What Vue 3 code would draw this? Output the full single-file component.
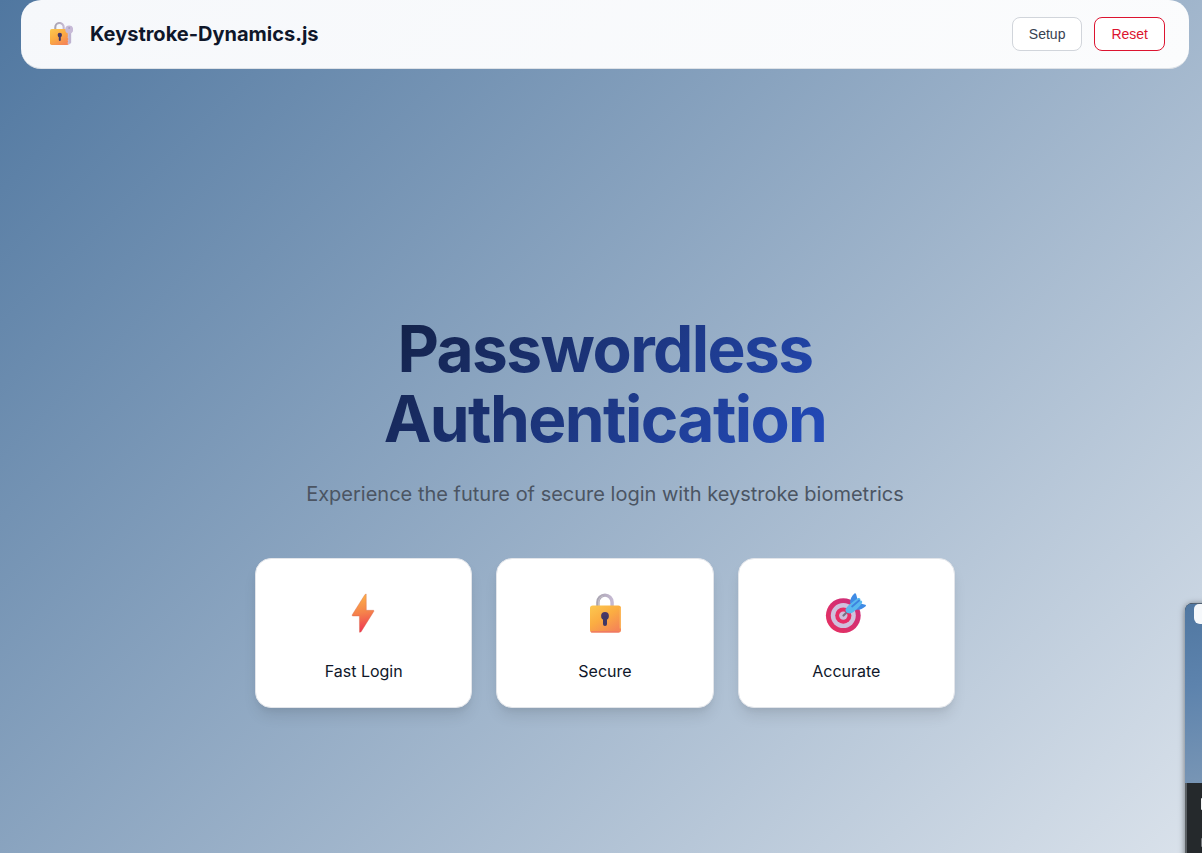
<script setup>
const features = [
  { icon: 'bolt', label: 'Fast Login' },
  { icon: 'lock', label: 'Secure' },
  { icon: 'target', label: 'Accurate' },
]
</script>

<template>
  <div class="page">
    <svg class="defs" width="0" height="0" aria-hidden="true">
      <defs>
        <linearGradient id="gold" x1="0" y1="0" x2="0.7" y2="1">
          <stop offset="0" stop-color="#fcc850" />
          <stop offset="0.5" stop-color="#fbad42" />
          <stop offset="1" stop-color="#f58656" />
        </linearGradient>
        <linearGradient id="fire" x1="0.3" y1="0" x2="0.4" y2="1">
          <stop offset="0" stop-color="#fdb446" />
          <stop offset="0.5" stop-color="#f5824b" />
          <stop offset="1" stop-color="#ef3454" />
        </linearGradient>
        <linearGradient id="steel" x1="0" y1="0" x2="1" y2="0">
          <stop offset="0" stop-color="#aaa5b2" />
          <stop offset="1" stop-color="#c5b9d2" />
        </linearGradient>
        <linearGradient id="hole" x1="0" y1="0" x2="0" y2="1">
          <stop offset="0" stop-color="#4e3868" />
          <stop offset="1" stop-color="#403764" />
        </linearGradient>
        <linearGradient id="ring" x1="1" y1="0" x2="0" y2="1">
          <stop offset="0" stop-color="#c92e7e" />
          <stop offset="1" stop-color="#e8315f" />
        </linearGradient>
      </defs>
    </svg>

    <header class="bar">
      <div class="brand">
        <svg class="logo" viewBox="0 0 24 24">
          <path d="M6.3 9V5.2a4.2 4.2 0 0 1 8.4 0V9" fill="none" stroke="url(#steel)" stroke-width="2.1" />
          <rect x="1" y="7" width="19" height="16" rx="1.7" fill="url(#gold)" />
          <circle cx="10.8" cy="13" r="2.2" fill="url(#hole)" />
          <path d="M9.8 13h2v5a1 1 0 0 1-2 0z" fill="#403764" />
          <path d="M18.8 9.5h3.4v11.3L20.8 22.3h-1.4L18.3 21l.9-1.3-.6-1.4.9-1.2-1-1.5.3-.8z" fill="#c7bdd8" />
          <path d="M21 11v10" stroke="#b3a7c7" stroke-width=".9" />
          <circle cx="20.2" cy="7.6" r="4" fill="#c7bad7" />
          <circle cx="20.2" cy="6" r="1" fill="#aaa0bd" />
        </svg>
        <span class="name">Keystroke-Dynamics.js</span>
      </div>
      <nav class="actions">
        <button class="btn">Setup</button>
        <button class="btn danger">Reset</button>
      </nav>
    </header>

    <main class="hero">
      <h1>Passwordless<br />Authentication</h1>
      <p class="lead">Experience the future of secure login with keystroke biometrics</p>
      <div class="cards">
        <div v-for="f in features" :key="f.icon" class="card">
          <svg v-if="f.icon === 'bolt'" class="icon" viewBox="0 0 40 40">
            <path d="M14 .9 15.2.4 15.3 16.7H22.7L22.9 17.6 10 38.3 8.5 38.7 8.4 22.4H1.4L1.1 21.4z" transform="translate(7 .6)" fill="url(#fire)" stroke="#d76b4b" stroke-width=".4" />
          </svg>
          <svg v-else-if="f.icon === 'lock'" class="icon" viewBox="0 0 40 40">
            <path d="M12.9 14V9.2a7.1 7.1 0 0 1 14.2 0V14" fill="none" stroke="url(#steel)" stroke-width="3.4" />
            <path d="M13.6 13V9.2a6.4 6.4 0 0 1 4.2-6" fill="none" stroke="#c6c2cb" stroke-width="1" />
            <rect x="5" y="12.4" width="31" height="27.2" rx="2.7" fill="url(#gold)" />
            <path d="M6.5 38.8h27" stroke="#ee7667" stroke-width="1.3" stroke-linecap="round" />
            <path d="M35.2 15v20" stroke="#fdbe5e" stroke-width="1.1" stroke-linecap="round" />
            <circle cx="20" cy="23" r="3.9" fill="url(#hole)" />
            <path d="M18 23h4v8a2 2 0 0 1-4 0z" fill="#403764" />
          </svg>
          <svg v-else class="icon" viewBox="0 0 40 40">
            <g transform="translate(-1 .2)">
              <circle cx="18.3" cy="22.4" r="17.4" fill="url(#ring)" />
              <circle cx="18.3" cy="22.4" r="12.5" fill="#cfc1dd" />
              <circle cx="18.3" cy="22.4" r="8.1" fill="#e72e66" />
              <circle cx="18.3" cy="22.4" r="4.2" fill="#cdbfda" />
              <path d="m18.5 22.3 4-4" stroke="#777083" stroke-width="2.2" stroke-linecap="round" />
              <path d="M25 9.5c0-3.5 2-7 4.5-9.2.9-.6 1.4.2 1.7 1.1l1.5 5.3-4.8 5zM30.5 15.5l5-5.2 4.8 1.2c1 .4.8 1.2.1 1.7-2.5 2.2-6 3.8-9.8 3.4z" fill="#3f8be5" />
              <path d="M20.7 15.8c1.2-2.8 8-8.3 11.7-10.6 2.1-1.3 3.7.4 2.8 2.1 1.5-.6 2.8 1.1 1.5 3-2.7 3.9-7.8 9-10.7 9.8-3 .8-6.4-1.7-5.3-4.3z" fill="#59b8ee" />
              <path d="m27.1 13.3 7-6" stroke="#3d83df" stroke-width="1.8" stroke-linecap="round" />
            </g>
          </svg>
          <span class="label">{{ f.label }}</span>
        </div>
      </div>
    </main>

    <aside class="preview">
      <div class="preview-page"><div class="preview-bar"></div></div>
      <div class="preview-foot"><i class="mark"></i><i class="mark dim"></i></div>
    </aside>
  </div>
</template>

<style>
body {
  margin: 0;
  overflow: hidden;
}
</style>

<style scoped>
* {
  box-sizing: border-box;
}
.page {
  position: relative;
  height: 853px;
  padding: 0 13px 0 21px;
  overflow: hidden;
  font-family: Inter, "Liberation Sans", sans-serif;
  color: #0f172a;
  background: linear-gradient(135deg, #5077a0 0%, #dae2eb 100%);
}
.defs {
  position: absolute;
}
.bar {
  display: flex;
  align-items: center;
  justify-content: space-between;
  height: 69px;
  padding: 0 24px 1px 28px;
  border-bottom: 1px solid #dee2e7;
  border-radius: 20px;
  background: linear-gradient(135deg, #f6f8fb, #fbfcfd);
}
.brand {
  display: flex;
  align-items: center;
  gap: 17px;
}
.logo {
  width: 24px;
  height: 24px;
}
.name {
  font-size: 20px;
  font-weight: 700;
  line-height: 30px;
}
.actions {
  display: flex;
  gap: 12px;
}
.btn {
  height: 34px;
  padding: 0 16px;
  border: 1px solid #d1d5db;
  border-radius: 8px;
  background: #fff;
  color: #374151;
  font: 14px "Liberation Sans", Arial, sans-serif;
}
.danger {
  border-color: #dc1430;
  color: #dc1430;
}
.hero {
  display: flex;
  flex-direction: column;
  align-items: center;
  padding-top: 245px;
}
h1 {
  width: 700px;
  margin: 0;
  font-size: 64px;
  font-weight: 700;
  line-height: 70.4px;
  letter-spacing: -1.6px;
  text-align: center;
  color: transparent;
  background: linear-gradient(135deg, #0f172a 0%, #1e3a8a 55%, #2554d8 100%);
  background-clip: text;
  -webkit-background-clip: text;
}
.lead {
  margin: 23px 0 48px;
  font-size: 20px;
  line-height: 32px;
  color: #4b5563;
}
.cards {
  display: grid;
  grid-template-columns: repeat(3, 1fr);
  gap: 24px;
  width: 700px;
}
.card {
  display: flex;
  flex-direction: column;
  align-items: center;
  height: 150px;
  padding-top: 34px;
  border: 1px solid #e2e5ea;
  border-radius: 16px;
  background: #fff;
  box-shadow: 0 10px 15px -3px rgba(0, 0, 0, 0.1), 0 4px 6px -2px rgba(0, 0, 0, 0.05);
}
.icon {
  width: 40px;
  height: 40px;
  overflow: visible;
}
.label {
  margin-top: 25px;
  font-size: 16px;
  line-height: 26px;
}
.preview {
  position: absolute;
  left: 1185px;
  top: 603px;
  width: 40px;
  height: 270px;
  border-radius: 8px;
  overflow: hidden;
  background: #25292c;
  box-shadow: 0 1px 6px rgba(0, 0, 0, 0.5);
}
.preview-page {
  height: 180px;
  padding-left: 9px;
  border-top: 1px solid #506173;
  background: linear-gradient(170deg, #5077a1, #5d83ad 45%, #7996b5);
}
.preview-bar {
  height: 20px;
  border-radius: 5px 0 0 6px;
  background: #f5f8fb;
}
.preview-foot {
  display: flex;
  flex-direction: column;
  gap: 28px;
  height: 90px;
  padding: 15px 0 0 14px;
  border-left: 2px solid #5b6064;
}
.mark {
  width: 8px;
  height: 12px;
  border-radius: 1px;
  background: #f1f3f4;
}
.dim {
  height: 9px;
  background: #777b7e;
}
</style>
